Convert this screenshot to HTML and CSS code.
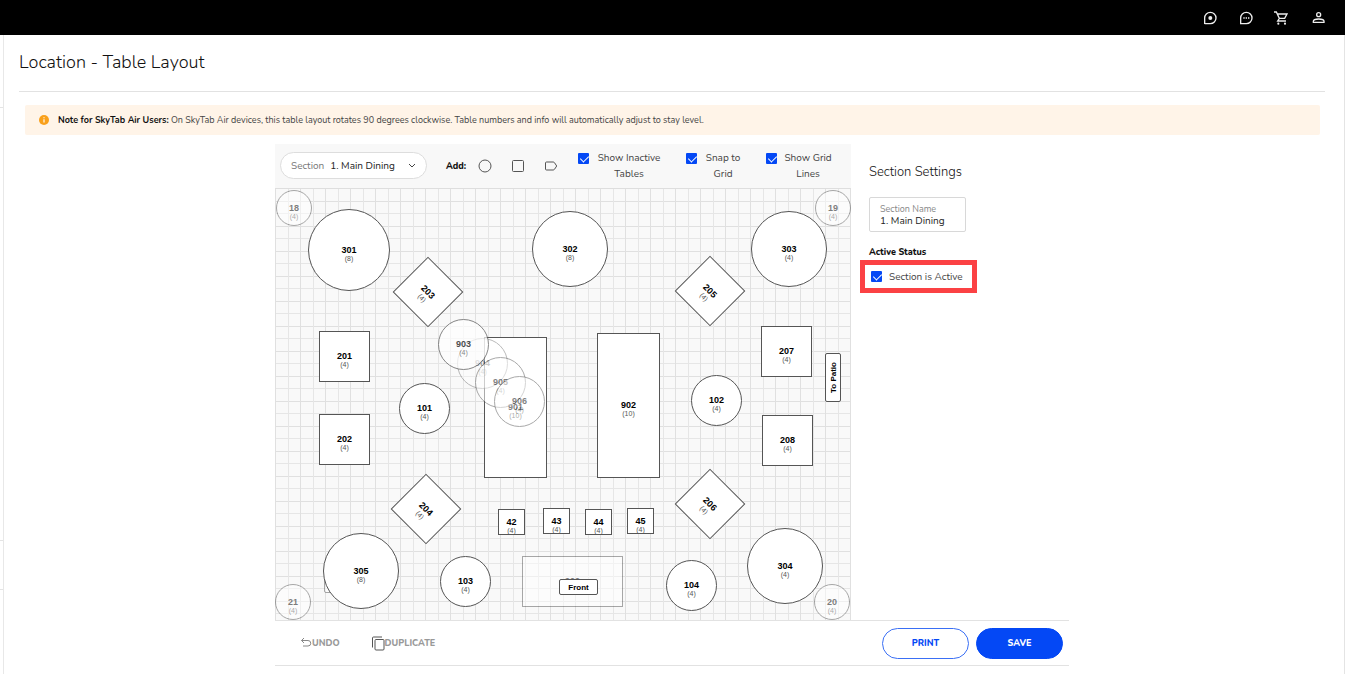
FILE: index.html
```html
<!DOCTYPE html>
<html lang="en">
<head>
<meta charset="utf-8">
<title>Location - Table Layout</title>
<link rel="stylesheet" href="styles.css">
</head>
<body>
<header class="topbar">
  <button class="icon-button" aria-label="Record"><svg viewBox="0 0 24 24" class="icon"><path d="M4 21v-9a8.500 8.500 0 1 1 8.500 8.500H4z"/><circle cx="12.500" cy="12" r="3" class="solid"/></svg></button>
  <button class="icon-button" aria-label="Chat"><svg viewBox="0 0 24 24" class="icon"><path d="M4 20.500V12a8.500 8.500 0 1 1 8.500 8.500H4z"/><path d="M8 12h2M11.500 12h2M15 12h2"/></svg></button>
  <button class="icon-button" aria-label="Cart"><svg viewBox="0 0 24 24" class="icon"><path d="M0 3h3.500l4.500 9.500h8l3.500-6.500H5M8 12.500l-2.500 4h12.500"/><circle cx="6.500" cy="20.500" r="1.600" class="solid"/><circle cx="16.500" cy="20.500" r="1.600" class="solid"/></svg></button>
  <button class="icon-button" aria-label="Account"><svg viewBox="0 0 24 24" class="icon"><circle cx="13" cy="7" r="3"/><path d="M5 18.500v-1.500c0-2.500 4-3.500 8-3.500s8 1 8 3.500v1.500z"/></svg></button>
</header>
<div class="shell">
  <div class="rail"><span class="rail-top"></span><span class="rail-middle"></span><span class="rail-low"></span></div>
  <main class="page">
    <h1 class="title">Location - Table Layout</h1>
    <p class="notice">
      <svg class="notice-icon" viewBox="0 0 12 12"><circle cx="6" cy="6" r="6" fill="#f9a01b"/><path d="M6 5.200v3.800M6 2.600v1.400" stroke="#fff4e8" stroke-width="1.500"/></svg>
      <span><strong>Note for SkyTab Air Users:</strong> On SkyTab Air devices, this table layout rotates 90 degrees clockwise. Table numbers and info will automatically adjust to stay level.</span>
    </p>
    <div class="workspace">
      <div class="columns">
        <section class="editor">
          <div class="toolbar">
            <div class="section-picker">
              <label for="section">Section</label>
              <select id="section"><option>1. Main Dining</option></select>
              <svg class="chevron" viewBox="0 0 8 6"><path d="M1 1l3 3 3-3"/></svg>
            </div>
            <div class="add-tools">
              <strong>Add:</strong>
              <button class="tool" aria-label="Add round table"><svg viewBox="0 0 14 14"><circle cx="7" cy="7" r="6"/></svg></button>
              <button class="tool" aria-label="Add square table"><svg viewBox="0 0 14 14"><rect x="1.500" y="1.500" width="11" height="11" rx="1"/></svg></button>
              <button class="tool" aria-label="Add label"><svg viewBox="0 0 14 14"><path d="M2.500 3h6.500q1 0 1.500.7L12.700 7l-2.200 3.300q-.5.700-1.500.700H2.500q-1 0-1-1V4q0-1 1-1z"/></svg></button>
            </div>
            <div class="options">
              <label class="option option-wide"><input type="checkbox" class="check" checked><span>Show Inactive Tables</span></label>
              <label class="option option-narrow"><input type="checkbox" class="check" checked><span>Snap to Grid</span></label>
              <label class="option"><input type="checkbox" class="check" checked><span>Show Grid Lines</span></label>
            </div>
          </div>
          <div class="floor" id="floor"></div>
        </section>
        <aside class="settings">
          <h2 class="settings-title">Section Settings</h2>
          <div class="field">
            <label for="name">Section Name</label>
            <input id="name" type="text" value="1. Main Dining">
          </div>
          <h3 class="status-title">Active Status</h3>
          <label class="active-box"><input type="checkbox" class="check" checked><span>Section is Active</span></label>
        </aside>
      </div>
      <footer class="actions">
        <button class="ghost undo"><svg viewBox="0 0 12 12"><path d="M4 1L1.500 3.500 4 6M1.500 3.500H8a2.700 2.700 0 0 1 0 5.500H3"/></svg>UNDO</button>
        <button class="ghost duplicate"><svg viewBox="0 0 14 15"><rect x="4" y="3.500" width="9" height="10.500" rx="1"/><path d="M1.500 11.500V2q0-1 1-1H11"/></svg>DUPLICATE</button>
        <span class="spacer"></span>
        <button class="pill">PRINT</button>
        <button class="pill pill-primary">SAVE</button>
      </footer>
    </div>
  </main>
</div>
<script src="floor.js"></script>
</body>
</html>
```
FILE: floor.js
```js
// kind, name, seats, left, top, width, height
const items = [
  ["round faded", "18", 4, 1, 1, 36, 36],
  ["round faded", "19", 4, 540, 1, 36, 36],
  ["round faded", "20", 4, 539, 395, 36, 36],
  ["round faded", "21", 4, 0, 395, 36, 36],
  ["sign faded", "", 0, 49, 388, 40, 16],
  ["round", "301", 8, 33, 20, 82, 82],
  ["round", "302", 8, 257, 22, 76, 76],
  ["round", "303", 4, 476, 22, 76, 76],
  ["round", "304", 4, 472, 339, 76, 76],
  ["round", "305", 8, 48, 344, 76, 76],
  ["round", "101", 4, 124, 194, 51, 51],
  ["round", "102", 4, 416, 186, 51, 51],
  ["round", "103", 4, 165, 367, 51, 51],
  ["round", "104", 4, 391, 371, 51, 51],
  ["diamond", "203", 4, 128, 78, 50, 50],
  ["diamond", "204", 4, 126, 295, 50, 50],
  ["diamond", "205", 4, 410, 77, 50, 50],
  ["diamond", "206", 4, 410, 290, 50, 50],
  ["square", "201", 4, 44, 142, 51, 51],
  ["square", "202", 4, 44, 225, 51, 51],
  ["square", "207", 4, 486, 137, 51, 51],
  ["square", "208", 4, 487, 226, 51, 51],
  ["square", "901", 10, 209, 148, 63, 141],
  ["square", "902", 10, 322, 144, 63, 145],
  ["round dim", "904", 4, 182, 149, 51, 51],
  ["round soft", "903", 4, 163, 130, 51, 51],
  ["round faded", "905", 4, 200, 168, 51, 51],
  ["round faded", "906", 4, 219, 187, 51, 51],
  ["square", "42", 4, 223, 320, 27, 26],
  ["square", "43", 4, 268, 319, 27, 26],
  ["square", "44", 4, 310, 320, 27, 26],
  ["square", "45", 4, 352, 319, 27, 26],
  ["square faded", "900", 4, 247, 367, 101, 51],
  ["sign", "Front", 0, 284, 390, 39, 16],
  ["sign upright", "To Patio", 0, 550, 164, 16, 49]
];

const floor = document.getElementById("floor");
for (const [kind, name, seats, left, top, width, height] of items) {
  const el = document.createElement("div");
  el.className = "item " + kind;
  el.style.left = left + "px";
  el.style.top = top + "px";
  el.style.width = width + "px";
  el.style.height = height + "px";
  const label = document.createElement("span");
  label.className = "item-name";
  label.textContent = name;
  el.append(label);
  if (seats) {
    const count = document.createElement("span");
    count.className = "item-seats";
    count.textContent = "(" + seats + ")";
    el.append(count);
  }
  floor.append(el);
}
```
FILE: styles.css
```css
* { box-sizing: border-box; }
body {
  margin: 0;
  min-height: 100vh;
  display: flex;
  flex-direction: column;
  overflow: hidden;
  font-family: Nunito, Lato, sans-serif;
  font-size: 10px;
  color: #333;
  background: #fff;
}
button, input, select { font: inherit; color: inherit; }
button { padding: 0; border: 0; background: none; }

.topbar {
  display: flex;
  justify-content: flex-end;
  align-items: center;
  gap: 20px;
  height: 35px;
  padding-right: 19px;
  background: #000;
}
.icon-button { display: flex; width: 16px; height: 16px; }
.icon { width: 16px; height: 16px; overflow: visible; fill: none; stroke: #ededed; stroke-width: 2; }
.solid { fill: #ededed; stroke: none; }

.shell { flex: 1; display: flex; border-right: 1px solid #e4e4e4; }
.rail { width: 4px; display: flex; flex-direction: column; border-right: 1px solid #e8e8e8; }
.rail span { border-bottom: 1px solid #e4e4e4; }
.rail-top { height: 73px; }
.rail-middle { height: 433px; }
.rail-low { height: 49px; }

.page { flex: 1; min-width: 0; padding: 0 19px 0 15px; }
.title {
  margin: 0 0 13px;
  padding: 15px 0 17px;
  border-bottom: 1px solid #e2e2e2;
  font-size: 18px;
  line-height: 24px;
  font-weight: 300;
  color: #111;
}
.notice {
  display: flex;
  align-items: center;
  gap: 9px;
  min-height: 30px;
  margin: 0 5px 9px 6px;
  padding: 0 14px;
  border-radius: 2px;
  background: #fff4e8;
  font-size: 9px;
  color: #444;
}
.notice strong { color: #111; }
.notice-icon { width: 10px; height: 10px; }

.workspace { max-width: 794px; margin: 0 auto; border-bottom: 1px solid #e2e2e2; }
.columns { display: flex; align-items: flex-start; }
.editor { flex: none; width: 576px; }
.toolbar {
  display: flex;
  height: 45px;
  padding-left: 5px;
  background: #f8f8f8;
  border-bottom: 1px solid #dedede;
}
.section-picker {
  display: flex;
  align-items: center;
  gap: 6px;
  flex: none;
  width: 147px;
  height: 27px;
  margin-top: 8px;
  padding: 0 10px;
  border: 1px solid #ddd;
  border-radius: 14px;
  background: #fff;
}
.section-picker label { color: #777; }
.section-picker select { flex: 1; min-width: 0; appearance: none; padding: 0; border: 0; background: none; color: #222; }
.chevron { width: 8px; height: 6px; fill: none; stroke: #444; stroke-width: 1; }
.add-tools {
  display: flex;
  align-items: center;
  gap: 19px;
  margin-left: 19px;
  font-size: 9px;
  color: #111;
}
.add-tools strong { margin-right: -7px; font-weight: 800; }
.tool { display: flex; }
.tool svg { width: 14px; height: 14px; fill: none; stroke: #555; stroke-width: 1; }
.options { display: flex; gap: 22px; margin-left: 20px; padding-top: 6px; }
.option { display: flex; gap: 5px; width: 68px; text-align: center; line-height: 16px; color: #444; }
.option-narrow { width: 58px; }
.option-wide { width: 86px; }
.option span { flex: 1; }
.check {
  appearance: none;
  position: relative;
  flex: none;
  width: 11px;
  height: 11px;
  margin: 3px 0 0;
  border-radius: 1px;
  background: #0448f5;
}
.check:checked::after {
  content: "";
  position: absolute;
  left: 4px;
  top: 1px;
  width: 4px;
  height: 7px;
  border: solid #fff;
  border-width: 0 1px 1px 0;
  transform: rotate(45deg);
}

.floor {
  position: relative;
  height: 431px;
  background-color: #f9f9f9;
  background-image:
    linear-gradient(90deg, #e0e0e0 1px, transparent 1px, transparent 13px, #e6e6e6 13px, #e6e6e6 14px, transparent 14px),
    linear-gradient(transparent 12px, #e0e0e0 12px, #e0e0e0 13px, transparent 13px, transparent 24px, #e6e6e6 24px);
  background-size: 25px 25px;
  overflow: hidden;
  font-family: "Liberation Sans", Arial, sans-serif;
}
.item {
  position: absolute;
  display: flex;
  flex-direction: column;
  align-items: center;
  justify-content: center;
  padding-top: 7px;
  border: 1px solid #555;
  background: #fff;
}
.item-name { font-size: 9px; line-height: 9px; font-weight: 700; color: #000; }
.item-seats { font-size: 7px; line-height: 7px; color: #555; }
.round { border-radius: 50%; }
.diamond { transform: rotate(45deg); }
.sign { padding: 0; border-radius: 2px; }
.sign .item-name { font-size: 8px; white-space: nowrap; }
.upright .item-name { transform: rotate(-90deg); }
.soft { opacity: .7; }
.faded { opacity: .5; }
.dim { opacity: .4; }

.settings { padding: 19px 0 0 18px; }
.settings-title { margin: 0 0 16px; font-size: 13px; line-height: 18px; font-weight: 300; color: #111; }
.field {
  display: flex;
  flex-direction: column;
  justify-content: center;
  width: 97px;
  height: 35px;
  padding: 1px 10px 0;
  border: 1px solid #d8d8d8;
  border-radius: 2px;
}
.field label { font-size: 9px; line-height: 11px; color: #888; }
.field input { width: 100%; height: 12px; padding: 0; border: 0; font-size: 10px; color: #222; }
.status-title { margin: 14px 0 2px; font-size: 9px; line-height: 12px; font-weight: 800; color: #111; }
.active-box {
  display: flex;
  align-items: center;
  gap: 7px;
  width: 117px;
  height: 33px;
  margin-left: -9px;
  padding-left: 6px;
  border: 5px solid #fb4144;
  white-space: nowrap;
  color: #444;
}
.active-box .check { margin: 0; }

.actions {
  display: flex;
  align-items: center;
  gap: 7px;
  height: 45px;
  padding: 0 6px 0 25px;
  border-top: 1px solid #e2e2e2;
}
.ghost { display: flex; align-items: center; font-size: 9px; font-weight: 800; color: #999; }
.ghost svg { fill: none; stroke: #888; stroke-width: 1; }
.undo { margin-right: 24px; }
.undo svg { width: 12px; height: 12px; }
.duplicate svg { width: 14px; height: 15px; stroke: #555; }
.spacer { flex: 1; }
.pill {
  width: 87px;
  height: 31px;
  border: 1px solid #3a6ff5;
  border-radius: 16px;
  font-size: 9px;
  font-weight: 800;
  color: #0448f5;
}
.pill-primary { border-color: #0448f5; background: #0448f5; color: #fff; }
```
